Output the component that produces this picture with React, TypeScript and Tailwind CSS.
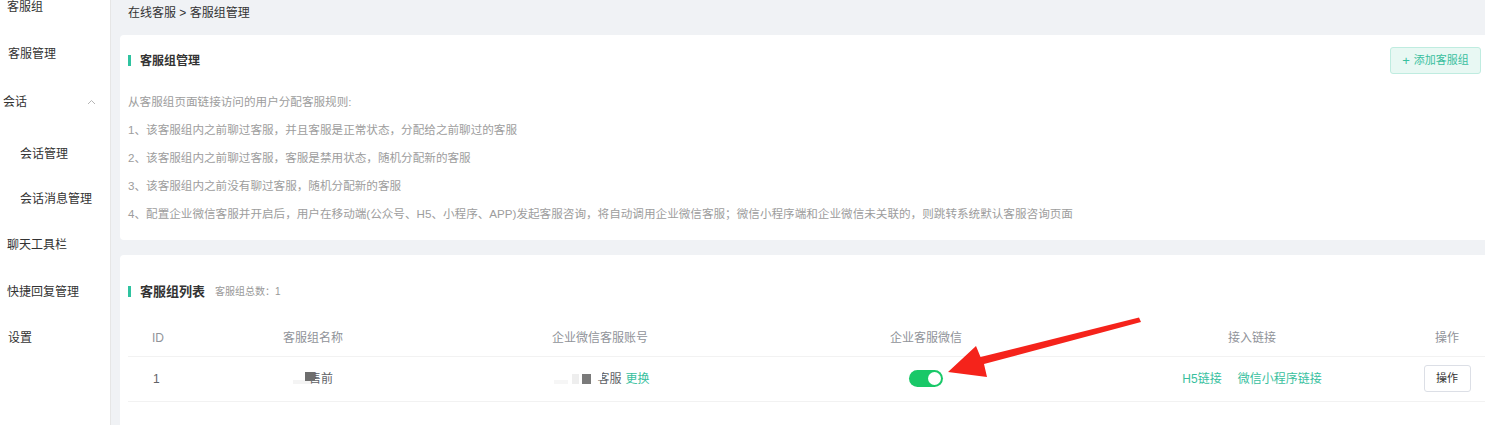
const font = "font-['Liberation_Sans','Noto_Sans_CJK_SC',sans-serif]";

function Sidebar() {
  return (
    <aside className="w-[111px] shrink-0 border-r border-[#e6e6e6] bg-white text-[12px] text-[#333]">
      <div className="mt-[-17px] flex flex-col">
        <div className="flex h-[47px] items-center pl-[7px]">客服组</div>
        <div className="flex h-[47px] items-center pl-[8px]">客服管理</div>
        <div className="flex h-[55px] items-center justify-between pb-[5px] pl-[3px] pr-[14px]">
          <span>会话</span>
          <svg width="9" height="6" viewBox="0 0 9 6" fill="none" stroke="#b5b5b5" strokeWidth="1">
            <path d="M1 5 L4.5 1.5 L8 5" />
          </svg>
        </div>
        <div className="flex h-[44px] items-center pl-[20px]">会话管理</div>
        <div className="flex h-[45px] items-center pl-[20px]">会话消息管理</div>
        <div className="flex h-[47px] items-center pl-[7px]">聊天工具栏</div>
        <div className="flex h-[47px] items-center pl-[7px]">快捷回复管理</div>
        <div className="flex h-[46px] items-center pl-[8px]">设置</div>
      </div>
    </aside>
  );
}

function SectionTitle({ children }: { children: React.ReactNode }) {
  return (
    <div className="flex items-center">
      <span className="mr-[9px] h-[11px] w-[3px] bg-[#2fc3a0]" />
      {children}
    </div>
  );
}

const rules = [
  "从客服组页面链接访问的用户分配客服规则:",
  "1、该客服组内之前聊过客服，并且客服是正常状态，分配给之前聊过的客服",
  "2、该客服组内之前聊过客服，客服是禁用状态，随机分配新的客服",
  "3、该客服组内之前没有聊过客服，随机分配新的客服",
  "4、配置企业微信客服并开启后，用户在移动端(公众号、H5、小程序、APP)发起客服咨询，将自动调用企业微信客服；微信小程序端和企业微信未关联的，则跳转系统默认客服咨询页面",
];

const grid = "grid grid-cols-[62px_246px_328px_324px_328px_62px] items-center";

export default function App() {
  return (
    <div className={`relative flex h-[425px] w-[1485px] overflow-hidden bg-[#f0f2f5] ${font}`}>
      <Sidebar />
      <main className="flex min-w-0 flex-1 flex-col pl-[9px]">
        <div className="flex h-[35px] items-start pl-[8px] pt-[6px] text-[12px] leading-[14px] text-[#333]">
          在线客服 &gt; 客服组管理
        </div>

        <section className="h-[205px] rounded-l-[4px] bg-white pl-[8px] pr-[4px] pt-[12px]">
          <div className="flex h-[27px] items-center justify-between">
            <SectionTitle>
              <span className="text-[12px] font-bold text-[#333]">客服组管理</span>
            </SectionTitle>
            <button className="flex h-[27px] w-[91px] items-center justify-center gap-[4px] rounded-[3px] border border-[#bfece0] bg-[#e8f8f3] text-[11px] text-[#38bf9e]">
              <span className="text-[13px] leading-none">+</span>
              添加客服组
            </button>
          </div>
          <div className="mt-[14px] text-[11.6px] leading-[28px] text-[#9d9d9d]">
            {rules.map((r) => (
              <div key={r}>{r}</div>
            ))}
          </div>
        </section>

        <section className="mt-[15px] flex-1 rounded-tl-[4px] bg-white pl-[8px] pt-[27px]">
          <SectionTitle>
            <span className="text-[13px] font-bold text-[#333]">客服组列表</span>
            <span className="ml-[10px] text-[10px] text-[#999]">客服组总数：1</span>
          </SectionTitle>

          <div className="mt-[19px] text-[12px]">
            <div className={`${grid} h-[36px] border-b border-[#f2f2f2] text-[#909399]`}>
              <div className="pl-[24px]">ID</div>
              <div className="text-center">客服组名称</div>
              <div className="text-center">企业微信客服账号</div>
              <div className="text-center">企业客服微信</div>
              <div className="text-center">接入链接</div>
              <div className="text-center">操作</div>
            </div>
            <div className={`${grid} h-[45px] border-b border-[#f2f2f2] text-[#606266]`}>
              <div className="pl-[25px]">1</div>
              <div className="flex items-center justify-center">
                <span className="mr-[-2px] mt-[6px] h-[4px] w-[18px] bg-[#f4f4f4]" />
                <span className="relative">
                  <span className="absolute left-[-4px] top-[2px] h-[9px] w-[10px] bg-[#6e6e6e]" />
                  售前
                </span>
              </div>
              <div className="flex items-center justify-center gap-[4px] pl-[4px]">
                <span className="relative flex items-center">
                  <span className="mr-[4px] mt-[6px] h-[4px] w-[14px] bg-[#f6f6f6]" />
                  <span className="mr-[3px] h-[10px] w-[7px] bg-[#eeeeee]" />
                  <span className="mr-[6px] h-[10px] w-[9px] bg-[#7a7a7a]" />
                  <span className="relative">
                    <span className="absolute left-[-3px] top-[0px] h-[10px] w-[8px] bg-white" />
                    客服
                  </span>
                </span>
                <span className="text-[#38bf9e]">更换</span>
              </div>
              <div className="flex justify-center">
                <div className="flex h-[17px] w-[34px] items-center justify-end rounded-full bg-[#19c868] pr-[2px]">
                  <span className="h-[13px] w-[13px] rounded-full bg-white" />
                </div>
              </div>
              <div className="flex justify-center gap-[16px] text-[#38bf9e]">
                <span>H5链接</span>
                <span>微信小程序链接</span>
              </div>
              <div className="flex justify-center">
                <button className="h-[27px] w-[47px] rounded-[3px] border border-[#dcdfe6] bg-white text-[11px] text-[#333]">
                  操作
                </button>
              </div>
            </div>
          </div>
        </section>
      </main>

      <svg className="pointer-events-none absolute left-0 top-0" width="1485" height="425">
        <polygon
          fill="#f5231b"
          points="1139,317.5 1141,322 984,364 987,377 948,372 976,346 980.5,357"
        />
      </svg>
    </div>
  );
}
